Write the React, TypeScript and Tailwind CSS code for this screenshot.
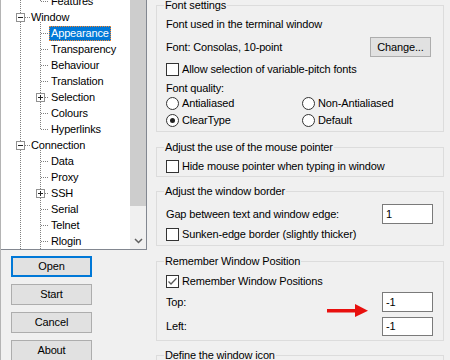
import type { ReactNode } from "react";

type Row = { label: string; level: 1 | 2; sel?: boolean };

const rows: Row[] = [
  { label: "Features", level: 2 },
  { label: "Window", level: 1 },
  { label: "Appearance", level: 2, sel: true },
  { label: "Transparency", level: 2 },
  { label: "Behaviour", level: 2 },
  { label: "Translation", level: 2 },
  { label: "Selection", level: 2 },
  { label: "Colours", level: 2 },
  { label: "Hyperlinks", level: 2 },
  { label: "Connection", level: 1 },
  { label: "Data", level: 2 },
  { label: "Proxy", level: 2 },
  { label: "SSH", level: 2 },
  { label: "Serial", level: 2 },
  { label: "Telnet", level: 2 },
  { label: "Rlogin", level: 2 },
];

// row centre in page y
const cy = (i: number) => 1 + 16 * i;

function Expander({ x, y, plus }: { x: number; y: number; plus?: boolean }) {
  // x = left pixel of the 9px box (page coords), y = row centre
  const sx = x - 1;
  return (
    <g>
      <rect x={sx + 0.5} y={y - 4 + 0.5} width={8} height={8} fill="#fff" stroke="#919191" />
      <line x1={sx + 2} x2={sx + 7} y1={y + 0.5} y2={y + 0.5} stroke="#222" />
      {plus && <line x1={sx + 4.5} x2={sx + 4.5} y1={y - 2} y2={y + 3} stroke="#222" />}
    </g>
  );
}

function TreeLines() {
  const dot = { stroke: "#808080", strokeDasharray: "1 1", shapeRendering: "crispEdges" as const };
  const X = (x: number) => x - 0.5;
  return (
    <svg className="absolute left-0 top-0" width="129" height="250">
      {/* root line */}
      <line x1={X(20)} x2={X(20)} y1={0} y2={250} {...dot} />
      {/* child lines */}
      <line x1={X(40)} x2={X(40)} y1={0} y2={cy(0)} {...dot} />
      <line x1={X(40)} x2={X(40)} y1={cy(1) + 5} y2={cy(8)} {...dot} />
      <line x1={X(40)} x2={X(40)} y1={cy(9) + 5} y2={250} {...dot} />
      {rows.map((r, i) =>
        r.level === 1 ? (
          <line key={i} x1={24} x2={30} y1={cy(i) + 0.5} y2={cy(i) + 0.5} {...dot} />
        ) : (
          <line key={i} x1={40} x2={48} y1={cy(i) + 0.5} y2={cy(i) + 0.5} {...dot} />
        )
      )}
      <Expander x={16} y={cy(1)} />
      <Expander x={16} y={cy(9)} />
      <Expander x={36} y={cy(6)} plus />
      <Expander x={36} y={cy(12)} plus />
    </svg>
  );
}

function Tree() {
  return (
    <div className="flex h-[251px] w-full border-r border-b border-[#828790] bg-white">
      <div className="relative w-[129px] overflow-hidden">
        <TreeLines />
        <div className="relative mt-[-7px] flex flex-col">
          {rows.map((r) => (
            <div
              key={r.label}
              className={`flex h-[16px] items-center ${r.level === 1 ? "pl-[28px]" : "pl-[48px]"}`}
            >
              <span
                className={`h-[15px] border px-[1px] leading-[13px] whitespace-nowrap ${
                  r.sel
                    ? "border-dotted border-[#ff8828] bg-[#0078d7] text-white"
                    : "border-transparent"
                }`}
              >
                {r.label}
              </span>
            </div>
          ))}
        </div>
      </div>
      <div className="flex w-[16px] flex-col bg-[#f0f0f0]">
        <div className="h-[206px] bg-[#cdcdcd]" />
        <div className="flex-1" />
        <div className="flex h-[17px] items-center justify-center">
          <svg width="9" height="6" viewBox="0 0 9 6">
            <polyline points="1,1 4.5,4.5 8,1" fill="none" stroke="#606060" strokeWidth="1.5" />
          </svg>
        </div>
      </div>
    </div>
  );
}

function Btn({ children, primary }: { children: ReactNode; primary?: boolean }) {
  return (
    <button
      className={`flex h-[21px] w-[81px] items-center justify-center bg-[#e1e1e1] ${
        primary ? "border-2 border-[#0078d7]" : "border border-[#adadad]"
      }`}
    >
      {children}
    </button>
  );
}

function Group({ title, className, children }: { title: string; className: string; children?: ReactNode }) {
  return (
    <div className={`relative flex flex-col border border-[#dcdcdc] pl-[9px] pr-[10px] ${className}`}>
      <span className="absolute left-[7px] top-[-8px] bg-[#f0f0f0] px-[1px] leading-[14px] whitespace-nowrap">
        {title}
      </span>
      {children}
    </div>
  );
}

function CheckBox({ label, checked, className }: { label: string; checked?: boolean; className: string }) {
  return (
    <div className={`flex h-[16px] items-center gap-[3px] ${className}`}>
      <span className="flex h-[13px] w-[13px] shrink-0 items-center justify-center border border-[#333] bg-white">
        {checked && (
          <svg width="11" height="11" viewBox="0 0 11 11">
            <path d="M1.5 5.5 L4 8 L9.5 2.2" fill="none" stroke="#5a5a5a" strokeWidth="1.3" />
          </svg>
        )}
      </span>
      <span className="whitespace-nowrap">{label}</span>
    </div>
  );
}

function Radio({ label, checked }: { label: string; checked?: boolean }) {
  return (
    <div className="flex items-center gap-[3px]">
      <span className="flex h-[13px] w-[13px] shrink-0 items-center justify-center rounded-full border border-[#333] bg-white">
        {checked && <span className="h-[5px] w-[5px] rounded-full bg-[#222]" />}
      </span>
      <span className="whitespace-nowrap">{label}</span>
    </div>
  );
}

function Field({ value, h = "h-[20px]" }: { value: string; h?: string }) {
  return (
    <div className={`flex w-[51px] items-center border border-[#7a7a7a] bg-white pl-[3px] ${h}`}>{value}</div>
  );
}

export default function App() {
  return (
    <div className="flex h-[360px] w-[450px] overflow-hidden bg-[#f0f0f0] font-['Liberation_Sans',Arial,sans-serif] text-[11px] tracking-[-0.15px] text-black">
      <div className="flex w-[147px] shrink-0 flex-col border-l border-[#b4b4b4]">
        <Tree />
        <div className="ml-[10px] mt-[6px] flex flex-col gap-[7px]">
          <Btn primary>Open</Btn>
          <Btn>Start</Btn>
          <Btn>Cancel</Btn>
          <Btn>About</Btn>
        </div>
      </div>

      <div className="ml-[9px] flex w-[288px] shrink-0 flex-col">
        <Group title="Font settings" className="mt-[5px] h-[127px] shrink-0">
          <div className="mt-[10px] h-[16px] leading-[16px]">Font used in the terminal window</div>
          <div className="mt-[5px] flex h-[20px] items-center justify-between">
            <span>Font: Consolas, 10-point</span>
            <button className="mr-[2px] flex h-[20px] w-[61px] items-center justify-center border border-[#adadad] bg-[#e1e1e1]">
              Change...
            </button>
          </div>
          <CheckBox label="Allow selection of variable-pitch fonts" className="mt-[4px]" />
          <div className="mt-[5px] h-[13px] leading-[13px]">Font quality:</div>
          <div className="grid h-[13px] grid-cols-[136px_1fr] items-center">
            <Radio label="Antialiased" />
            <Radio label="Non-Antialiased" />
          </div>
          <div className="mt-[4px] grid h-[16px] grid-cols-[136px_1fr] items-center">
            <Radio label="ClearType" checked />
            <Radio label="Default" />
          </div>
        </Group>

        <Group title="Adjust the use of the mouse pointer" className="mt-[15px] h-[30px] shrink-0">
          <CheckBox label="Hide mouse pointer when typing in window" className="mt-[10px]" />
        </Group>

        <Group title="Adjust the window border" className="mt-[14px] h-[55px] shrink-0">
          <div className="mt-[12px] flex h-[20px] items-center justify-between">
            <span>Gap between text and window edge:</span>
            <Field value="1" />
          </div>
          <CheckBox label="Sunken-edge border (slightly thicker)" className="mt-[2px]" />
        </Group>

        <Group title="Remember Window Position" className="mt-[15px] h-[80px] shrink-0">
          <CheckBox label="Remember Window Positions" checked className="mt-[11px]" />
          <div className="mt-[3px] flex h-[20px] items-center justify-between">
            <span>Top:</span>
            <Field value="-1" />
          </div>
          <div className="mt-[5px] flex h-[19px] items-center justify-between">
            <span>Left:</span>
            <Field value="-1" h="h-[19px]" />
          </div>
          <svg className="absolute left-[170px] top-[41px]" width="42" height="15" viewBox="0 0 42 15">
            <rect x="0" y="6" width="30" height="3.5" fill="#e8100e" />
            <polygon points="28,1 41,7.7 28,14" fill="#e8100e" />
          </svg>
        </Group>

        <Group title="Define the window icon" className="mt-[14px] h-[40px] shrink-0" />
      </div>
    </div>
  );
}
